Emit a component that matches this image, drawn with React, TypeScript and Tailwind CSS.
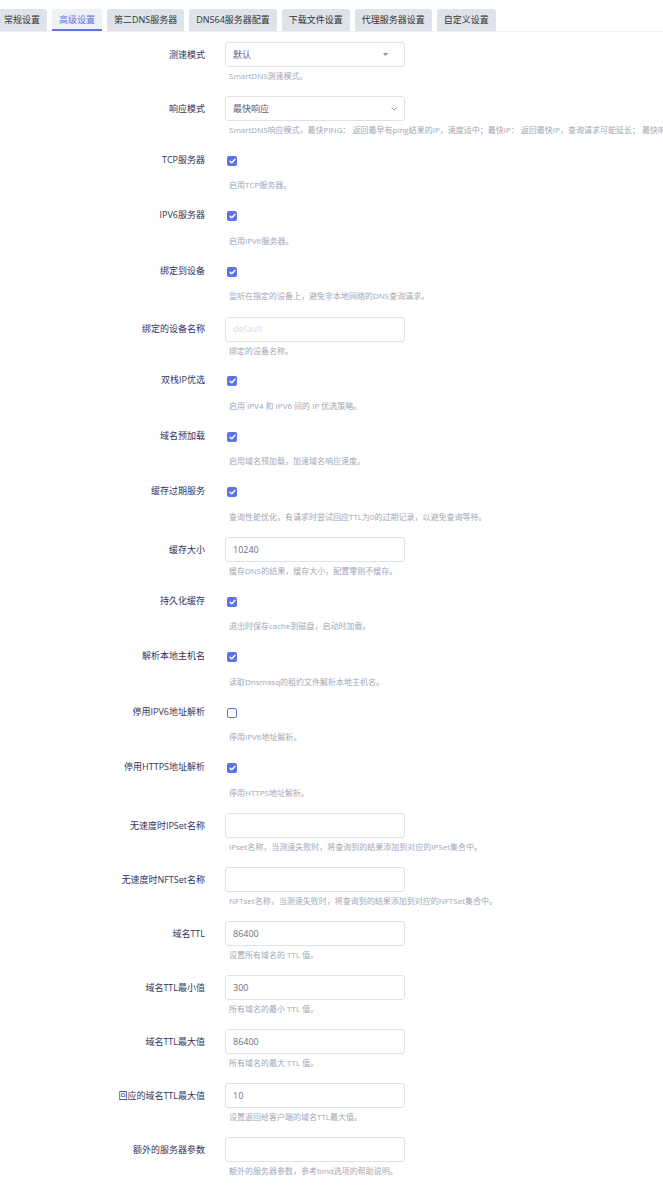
import React from "react";

type Row = {
  label: string;
  kind: "select" | "check" | "input";
  value?: string;
  placeholder?: string;
  checked?: boolean;
  caret?: "triangle" | "chevron";
  desc: string;
};

const tabs = ["常规设置", "高级设置", "第二DNS服务器", "DNS64服务器配置", "下载文件设置", "代理服务器设置", "自定义设置"];

const rows: Row[] = [
  { label: "测速模式", kind: "select", value: "默认", caret: "triangle", desc: "SmartDNS测速模式。" },
  {
    label: "响应模式",
    kind: "select",
    value: "最快响应",
    caret: "chevron",
    desc: "SmartDNS响应模式，最快PING： 返回最早有ping结果的IP，速度适中；最快IP： 返回最快IP，查询请求可能延长； 最快响应：返回最快响应的结果，查询请求时间最短。"
  },
  { label: "TCP服务器", kind: "check", checked: true, desc: "启用TCP服务器。" },
  { label: "IPV6服务器", kind: "check", checked: true, desc: "启用IPV6服务器。" },
  { label: "绑定到设备", kind: "check", checked: true, desc: "监听在指定的设备上，避免非本地网络的DNS查询请求。" },
  { label: "绑定的设备名称", kind: "input", placeholder: "default", desc: "绑定的设备名称。" },
  { label: "双栈IP优选", kind: "check", checked: true, desc: "启用 IPV4 和 IPV6 间的 IP 优选策略。" },
  { label: "域名预加载", kind: "check", checked: true, desc: "启用域名预加载，加速域名响应速度。" },
  { label: "缓存过期服务", kind: "check", checked: true, desc: "查询性能优化，有请求时尝试回应TTL为0的过期记录，以避免查询等待。" },
  { label: "缓存大小", kind: "input", value: "10240", desc: "缓存DNS的结果，缓存大小，配置零则不缓存。" },
  { label: "持久化缓存", kind: "check", checked: true, desc: "退出时保存cache到磁盘，启动时加载。" },
  { label: "解析本地主机名", kind: "check", checked: true, desc: "读取Dnsmasq的租约文件解析本地主机名。" },
  { label: "停用IPV6地址解析", kind: "check", checked: false, desc: "停用IPV6地址解析。" },
  { label: "停用HTTPS地址解析", kind: "check", checked: true, desc: "停用HTTPS地址解析。" },
  { label: "无速度时IPSet名称", kind: "input", desc: "IPset名称，当测速失败时，将查询到的结果添加到对应的IPSet集合中。" },
  { label: "无速度时NFTSet名称", kind: "input", desc: "NFTset名称，当测速失败时，将查询到的结果添加到对应的NFTSet集合中。" },
  { label: "域名TTL", kind: "input", value: "86400", desc: "设置所有域名的 TTL 值。" },
  { label: "域名TTL最小值", kind: "input", value: "300", desc: "所有域名的最小 TTL 值。" },
  { label: "域名TTL最大值", kind: "input", value: "86400", desc: "所有域名的最大 TTL 值。" },
  { label: "回应的域名TTL最大值", kind: "input", value: "10", desc: "设置返回给客户端的域名TTL最大值。" },
  { label: "额外的服务器参数", kind: "input", desc: "额外的服务器参数，参考bind选项的帮助说明。" }
];

const Check: React.FC<{ checked?: boolean }> = ({ checked }) =>
  checked ? (
    <div className="w-[10px] h-[10px] rounded-[2px] bg-[#5e72e4] flex items-center justify-center ml-[2px]">
      <svg width="7" height="6" viewBox="0 0 7 6">
        <path d="M1 3.2 L2.8 4.8 L6 1.2" stroke="white" strokeWidth="1.4" fill="none" strokeLinecap="round" strokeLinejoin="round" />
      </svg>
    </div>
  ) : (
    <div className="w-[10px] h-[10px] rounded-[2px] border border-[#5e72e4] bg-white ml-[2px]" />
  );

const Control: React.FC<{ row: Row }> = ({ row }) => {
  if (row.kind === "check") {
    return (
      <div className="h-[21px] flex items-center">
        <Check checked={row.checked} />
      </div>
    );
  }
  if (row.kind === "select") {
    return (
      <div className="w-[180px] h-[25px] border border-[#dee2e6] rounded-[3px] bg-white flex items-center justify-between pl-[7px] pr-[7px] text-[9px] text-[#525f7f]">
        <span>{row.value}</span>
        {row.caret === "triangle" ? (
          <svg width="5" height="3" viewBox="0 0 5 3" className="mr-[9px]">
            <path d="M0 0 L5 0 L2.5 3 Z" fill="#8a8f99" />
          </svg>
        ) : (
          <svg width="6" height="4" viewBox="0 0 6 4">
            <path d="M0.6 0.6 L3 3 L5.4 0.6" stroke="#8a8f99" strokeWidth="0.9" fill="none" />
          </svg>
        )}
      </div>
    );
  }
  return (
    <div className="w-[180px] h-[25px] border border-[#dee2e6] rounded-[3px] bg-white flex items-center px-[7px] text-[9px]">
      {row.value ? (
        <span className="text-[#6b6f80]">{row.value}</span>
      ) : (
        <span className="text-[#d8dbe2]">{row.placeholder}</span>
      )}
    </div>
  );
};

const App: React.FC = () => {
  return (
    <div
      className="w-full min-h-screen bg-white overflow-hidden"
      style={{ fontFamily: '"Open Sans", "Noto Sans CJK SC", sans-serif' }}
    >
      <div className="pt-[9px] border-b border-[#f1f2f4]">
        <div className="flex gap-[5px] ml-[-3px]">
          {tabs.map((t, i) => (
            <div
              key={t}
              className={
                i === 1
                  ? "h-[22px] px-[7px] flex items-center rounded-t-[3px] bg-[#eef1f6] text-[#5e72e4] text-[9px] whitespace-nowrap border-b-2 border-[#5e72e4] pt-[2px]"
                  : "h-[22px] px-[7px] flex items-center rounded-t-[3px] bg-[#dee3ea] text-[#333] text-[9px] whitespace-nowrap"
              }
            >
              {t}
            </div>
          ))}
        </div>
      </div>

      <div className="pt-[10px]">
        {rows.map((r) => (
          <div key={r.label} className={r.kind === "check" ? "flex pb-[14.5px]" : "flex pb-[14px]"}>
            <div
              className={
                r.kind === "check"
                  ? "w-[205px] h-[19px] shrink-0 flex items-center justify-end text-[9px] text-[#32325d] whitespace-nowrap"
                  : "w-[205px] h-[25px] shrink-0 flex items-center justify-end text-[9px] text-[#32325d] whitespace-nowrap"
              }
            >
              {r.label}
            </div>
            <div className="ml-[20px] flex flex-col">
              <Control row={r} />
              <div
                className={
                  r.kind === "check"
                    ? "mt-[8px] pl-[4px] text-[8px] leading-[12px] text-[#a3a7b5] whitespace-nowrap"
                    : "mt-[3px] pl-[4px] text-[8px] leading-[12px] text-[#a3a7b5] whitespace-nowrap"
                }
              >
                {r.desc}
              </div>
            </div>
          </div>
        ))}
      </div>
    </div>
  );
};

export default App;
